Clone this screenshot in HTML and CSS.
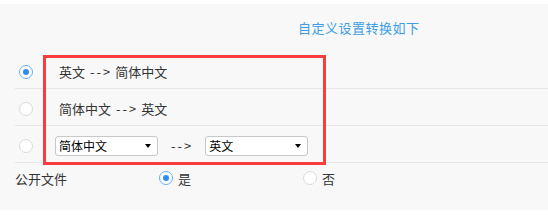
FILE: index.html
```html
<html>

<head>
<meta charset="utf-8">
<link rel="stylesheet" href="styles.css">
</head>

<body>

<div class="panel">
	<div class="title">自定义设置转换如下</div>

	<div class="options">
		<div class="row">
			<span class="radio checked"></span>
			<span class="choice text">英文<span class="dash">--&gt;</span>简体中文</span>
		</div>
		<div class="row">
			<span class="radio"></span>
			<span class="choice text">简体中文<span class="dash">--&gt;</span>英文</span>
		</div>
		<div class="row">
			<span class="radio"></span>
			<span class="choice">
				<span class="select">简体中文<span class="caret"></span></span>
				<span class="arrow">--&gt;</span>
				<span class="select">英文<span class="caret"></span></span>
			</span>
		</div>
		<div class="row plain">
			<span class="label">公开文件</span>
			<span class="group"><span class="radio checked"></span><span class="opt">是</span></span>
			<span class="group"><span class="radio"></span><span class="opt">否</span></span>
		</div>
	</div>

	<div class="mark"></div>
</div>

</body>

</html>
```

FILE: styles.css
```css
body
{
	margin: 0;
	background-color: #FFFFFF;
	font-family: "Noto Sans CJK SC", "Noto Sans", sans-serif;
	font-size: 13px;
	color: #333333;
}

.panel
{
	position: relative;
	margin-top: 4px;
	height: 206px;
	background-color: #F8F8F8;
}

.title
{
	padding: 16px 0 16px 298px;
	line-height: 16px;
	letter-spacing: 0.5px;
	color: #3D9DE6;
}

.options
{
	margin-left: 15px;
}

.row
{
	display: flex;
	align-items: center;
	height: 33px;
	padding-top: 3px;
	border-bottom: 1px solid #E6E6E6;
}

.row.plain
{
	height: 30px;
	padding-top: 0;
	border-bottom: none;
}

.radio
{
	position: relative;
	flex: none;
	width: 14px;
	height: 14px;
	margin-left: 4px;
	box-sizing: border-box;
	border: 1px solid #DADADA;
	border-radius: 50%;
	background-color: #FFFFFF;
}

.radio.checked
{
	border-color: #6AAEF2;
}

.radio.checked::after
{
	content: "";
	position: absolute;
	left: 3px;
	top: 3px;
	width: 6px;
	height: 6px;
	border-radius: 50%;
	background-color: #2D8CF0;
}

.choice
{
	display: flex;
	align-items: center;
	margin-left: 22px;
}

.text
{
	padding-left: 4px;
}

.dash
{
	margin: 0 3px 0 5px;
	letter-spacing: 2px;
}

.select
{
	display: flex;
	align-items: center;
	justify-content: space-between;
	width: 103px;
	height: 20px;
	box-sizing: border-box;
	padding: 0 6px 0 3px;
	border: 1px solid #C8C8C8;
	border-radius: 3px;
	background-color: #FFFFFF;
	font-size: 12px;
	color: #000000;
}

.caret
{
	width: 0;
	height: 0;
	border-left: 3px solid transparent;
	border-right: 3px solid transparent;
	border-top: 4px solid #000000;
}

.arrow
{
	margin: 0 12px 0 13px;
	letter-spacing: 2px;
}

.label
{
	width: 144px;
}

.group
{
	display: flex;
	align-items: center;
	width: 144px;
}

.group .radio
{
	margin-left: 0;
}

.opt
{
	margin-left: 5px;
}

.mark
{
	position: absolute;
	left: 43px;
	top: 51px;
	width: 283px;
	height: 110px;
	box-sizing: border-box;
	border: 3px solid #FA3C3C;
}
```
